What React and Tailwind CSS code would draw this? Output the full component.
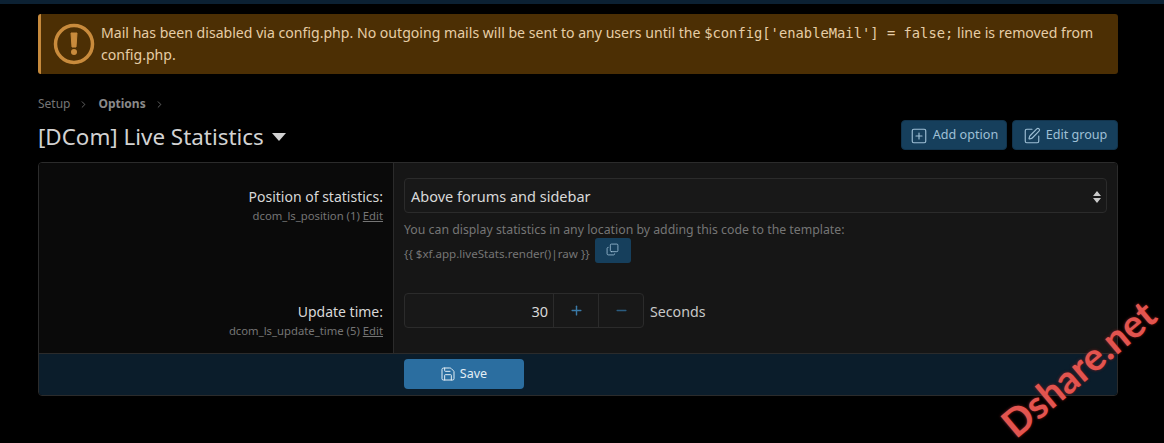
import React from 'react';
import { SquarePlus, SquarePen, Copy, Save, Plus, Minus, ChevronRight } from 'lucide-react';

const UI_FONT = 'font-["Noto_Sans",sans-serif]';

function Crumb({ children, bold }) {
  return (
    <span className={`flex items-center gap-[8px] ${bold ? 'font-bold text-[#8a8a8a]' : 'text-[#757575]'}`}>
      {children}
      <ChevronRight size={11} strokeWidth={1.5} className="text-[#8a8a8a]" />
    </span>
  );
}

function HeaderButton({ icon: Icon, children }) {
  return (
    <button className="flex h-[30px] w-[106px] items-center justify-center gap-[5px] rounded-[4px] border border-[#12344d] bg-[#163f5c] pt-[1px] text-[12.6px] text-[#9fc0d6]">
      <Icon size={18} strokeWidth={1.5} />
      {children}
    </button>
  );
}

function Row({ label, name, children, height }) {
  return (
    <div className={`flex ${height}`}>
      <div className="w-[355px] shrink-0 border-r border-[#2b2b2b] bg-[#0a0a0a] pr-[10px] pt-[24px] text-right">
        <div className="text-[14px] leading-[20px] text-[#d8d8d8]">{label}</div>
        <div className="mt-[1px] text-[11.3px] leading-[16px] text-[#757575]">
          {name} <span className="underline">Edit</span>
        </div>
      </div>
      <div className="flex-1 bg-[#161616] px-[10px] pt-[15px]">{children}</div>
    </div>
  );
}

export default function App() {
  return (
    <div className={`relative h-[443px] w-[1164px] overflow-hidden bg-black ${UI_FONT}`}>
      <div className="h-[4px] bg-[#0c2133]" />

      <div className="pl-[38px] pr-[46px] pt-[10px]">
        <div className="flex h-[60px] items-center rounded-[3px] border-l-[3px] border-[#c68a3c] bg-[#4c2f04] pl-[12px] pr-[20px]">
          <svg width="42" height="42" viewBox="0 0 42 42" className="shrink-0">
            <circle cx="21" cy="21" r="18.5" fill="none" stroke="#c98b3c" strokeWidth="3.5" />
            <path d="M18 10h6l-1 14h-4z" fill="#c98b3c" strokeLinejoin="round" stroke="#c98b3c" strokeWidth="1" />
            <circle cx="21" cy="29" r="3" fill="#c98b3c" />
          </svg>
          <p className="ml-[6px] text-[14.1px] leading-[22px] text-[#e6cda6]">
            Mail has been disabled via config.php. No outgoing mails will be sent to any users until the{' '}
            <code className="font-['DejaVu_Sans_Mono',monospace] text-[13.8px]">$config['enableMail'] = false;</code>{' '}
            line is removed from config.php.
          </p>
        </div>

        <div className="mt-[21px] flex h-[18px] items-center gap-[9px] text-[12px]">
          <Crumb>Setup</Crumb>
          <Crumb bold>Options</Crumb>
        </div>

        <div className="mt-[7px] flex h-[30px] items-center justify-between">
          <h1 className="flex items-center gap-[8px] pt-[3px] text-[22.4px] leading-[30px] text-[#d2d2d2]">
            [DCom] Live Statistics
            <svg width="14" height="8" viewBox="0 0 14 8"><path d="M0 0h14L7 8z" fill="#d2d2d2" /></svg>
          </h1>
          <div className="flex gap-[5px]">
            <HeaderButton icon={SquarePlus}>Add option</HeaderButton>
            <HeaderButton icon={SquarePen}>Edit group</HeaderButton>
          </div>
        </div>

        <div className="mt-[12px] overflow-hidden rounded-[4px] border border-[#2b2b2b]">
          <Row label="Position of statistics:" name="dcom_ls_position (1)" height="h-[115px]">
            <div className="flex h-[35px] items-center justify-between rounded-[4px] border border-[#2b2b2b] bg-[#181818] pl-[6px] pr-[5px] pt-[2px] text-[14.5px] text-[#d8d8d8]">
              Above forums and sidebar
              <svg width="8" height="12" viewBox="0 0 8 12"><path d="M4 0l4 5H0zM4 12L0 7h8z" fill="#c8c8c8" /></svg>
            </div>
            <div className="mt-[9px] text-[12.3px] leading-[16px] text-[#757575]">
              You can display statistics in any location by adding this code to the template:
            </div>
            <div className="flex h-[25px] items-center gap-[5px] text-[11.6px] text-[#757575]">
              <span className="pt-[7px]">{'{{ $xf.app.liveStats.render()|raw }}'}</span>
              <button className="flex h-[25px] w-[36px] items-center justify-center rounded-[3px] bg-[#163f5c] pb-[2px] text-[#9fc0d6]">
                <Copy size={13} strokeWidth={1.5} className="-scale-y-100" />
              </button>
            </div>
          </Row>

          <Row label="Update time:" name="dcom_ls_update_time (5)" height="h-[75px]">
            <div className="flex items-center gap-[6px]">
              <div className="flex h-[35px] w-[240px] items-stretch rounded-[4px] border border-[#2b2b2b] bg-[#181818] text-[14.5px] text-[#d8d8d8]">
                <div className="flex flex-1 items-center justify-end pr-[5px] pt-[2px]">30</div>
                <div className="flex w-[45px] items-center justify-center border-l border-[#2b2b2b] text-[#3a7aa8]">
                  <Plus size={15} strokeWidth={2.25} />
                </div>
                <div className="flex w-[45px] items-center justify-center border-l border-[#2b2b2b] text-[#2a5c80]">
                  <Minus size={15} strokeWidth={2.25} />
                </div>
              </div>
              <span className="pt-[2px] text-[14.2px] text-[#c8c8c8]">Seconds</span>
            </div>
          </Row>

          <div className="flex h-[42px] items-start border-t border-[#2b2b2b] bg-[#0b1d2b] pl-[365px] pt-[5px]">
            <button className="flex h-[30px] w-[120px] items-center justify-center gap-[4px] rounded-[4px] bg-[#2b6ea0] pr-[1px] text-[12.5px] text-[#e3eef5]">
              <Save size={16} strokeWidth={1.5} />
              Save
            </button>
          </div>
        </div>
      </div>

      <div className="absolute left-[968px] top-[346px] w-[220px] -rotate-[40deg] whitespace-nowrap text-center font-['Lato',sans-serif] text-[38.5px] font-bold leading-[44px] text-[#e2544f] [text-shadow:0_0_3px_#7a1f1c]">
        Dshare.net
      </div>
    </div>
  );
}
